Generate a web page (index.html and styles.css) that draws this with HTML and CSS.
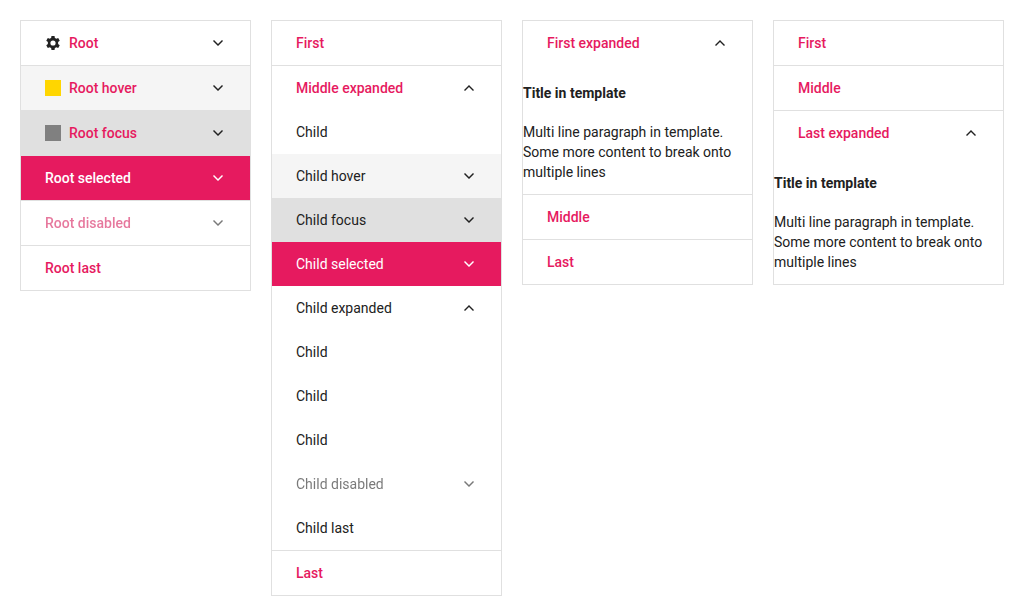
FILE: index.html
```html
<!DOCTYPE html>
<html lang="en">
<head>
<meta charset="utf-8">
<title>PanelBar</title>
<link rel="stylesheet" href="styles.css">
</head>
<body>
<svg class="defs" width="0" height="0">
  <symbol id="down" viewBox="0 0 512 512"><path fill="currentColor" d="M256 352 96 192l32-32 128 128 128-128 32 32z"/></symbol>
  <symbol id="up" viewBox="0 0 512 512"><path fill="currentColor" d="m256 160 160 160-32 32-128-128-128 128-32-32z"/></symbol>
</svg>
<main class="grid">
  <ul class="panelbar">
    <li class="item root"><svg class="icon" viewBox="0 0 24 24"><path fill="currentColor" fill-rule="evenodd" d="M9.700 1.500h4.600l.5 3.100c.7.300 1.400.700 2 1.100l3-1.200 2.300 4-2.500 1.900a8 8 0 0 1 0 3.200l2.500 1.900-2.300 4-3-1.200c-.6.400-1.300.800-2 1.100l-.5 3.100H9.700l-.5-3.100c-.7-.3-1.400-.7-2-1.100l-3 1.200-2.300-4 2.500-1.900a8 8 0 0 1 0-3.200L1.900 8.500l2.300-4 3 1.200c.6-.4 1.300-.8 2-1.100zM12 8.100a3.900 3.900 0 1 0 0 7.800 3.900 3.900 0 0 0 0-7.800z"/></svg><span>Root</span><svg class="toggle"><use href="#down"/></svg></li>
    <li class="item root hover"><i class="swatch gold"></i><span>Root hover</span><svg class="toggle"><use href="#down"/></svg></li>
    <li class="item root focus"><i class="swatch gray"></i><span>Root focus</span><svg class="toggle"><use href="#down"/></svg></li>
    <li class="item root selected"><span>Root selected</span><svg class="toggle"><use href="#down"/></svg></li>
    <li class="item root"><span class="disabled">Root disabled</span><svg class="toggle disabled"><use href="#down"/></svg></li>
    <li class="item root"><span>Root last</span></li>
  </ul>
  <ul class="panelbar">
    <li class="item root"><span>First</span></li>
    <li class="item root"><span>Middle expanded</span><svg class="toggle"><use href="#up"/></svg></li>
    <li class="item"><span>Child</span></li>
    <li class="item hover"><span>Child hover</span><svg class="toggle"><use href="#down"/></svg></li>
    <li class="item focus"><span>Child focus</span><svg class="toggle"><use href="#down"/></svg></li>
    <li class="item selected"><span>Child selected</span><svg class="toggle"><use href="#down"/></svg></li>
    <li class="item"><span>Child expanded</span><svg class="toggle"><use href="#up"/></svg></li>
    <li class="item"><span>Child</span></li>
    <li class="item"><span>Child</span></li>
    <li class="item"><span>Child</span></li>
    <li class="item"><span class="disabled">Child disabled</span><svg class="toggle disabled"><use href="#down"/></svg></li>
    <li class="item"><span>Child last</span></li>
    <li class="item root"><span>Last</span></li>
  </ul>
  <ul class="panelbar">
    <li class="item root"><span>First expanded</span><svg class="toggle"><use href="#up"/></svg></li>
    <li class="content"><h4>Title in template</h4><p>Multi line paragraph in template. Some more content to break onto multiple lines</p></li>
    <li class="item root"><span>Middle</span></li>
    <li class="item root"><span>Last</span></li>
  </ul>
  <ul class="panelbar">
    <li class="item root"><span>First</span></li>
    <li class="item root"><span>Middle</span></li>
    <li class="item root"><span>Last expanded</span><svg class="toggle"><use href="#up"/></svg></li>
    <li class="content"><h4>Title in template</h4><p>Multi line paragraph in template. Some more content to break onto multiple lines</p></li>
  </ul>
</main>
</body>
</html>
```
FILE: styles.css
```css
* { box-sizing: border-box; }
body { margin: 0; background: #fff; color: #212121; font: 14px/20px Roboto, sans-serif; }
.defs { position: absolute; }
.grid { display: grid; grid-template-columns: repeat(4, 231px); gap: 20px; padding: 20px; align-items: start; }
.panelbar { margin: 0; padding: 0; list-style: none; border: 1px solid #e0e0e0; }
.item { display: flex; align-items: center; gap: 8px; height: 44px; padding: 0 24px; }
.root { height: 45px; border-top: 1px solid #e0e0e0; color: #e61a5f; font-weight: 500; }
.root:first-child { height: 44px; border-top: 0; }
.icon { width: 16px; height: 16px; color: #212121; }
.swatch { width: 16px; height: 16px; }
.gold { background: #ffd600; }
.gray { background: #808080; }
.toggle { width: 16px; height: 16px; margin-left: auto; color: #212121; }
.hover { background: #f5f5f5; }
.focus { background: #e0e0e0; }
.selected { background: #e61a5f; color: #fff; }
.selected .toggle { color: #fff; }
.disabled { opacity: .6; filter: grayscale(.1); }
.content h4 { margin: 18px 0 19px; font-size: 14px; line-height: 20px; font-weight: 700; }
.content p { margin: 0 0 12px; }
```
